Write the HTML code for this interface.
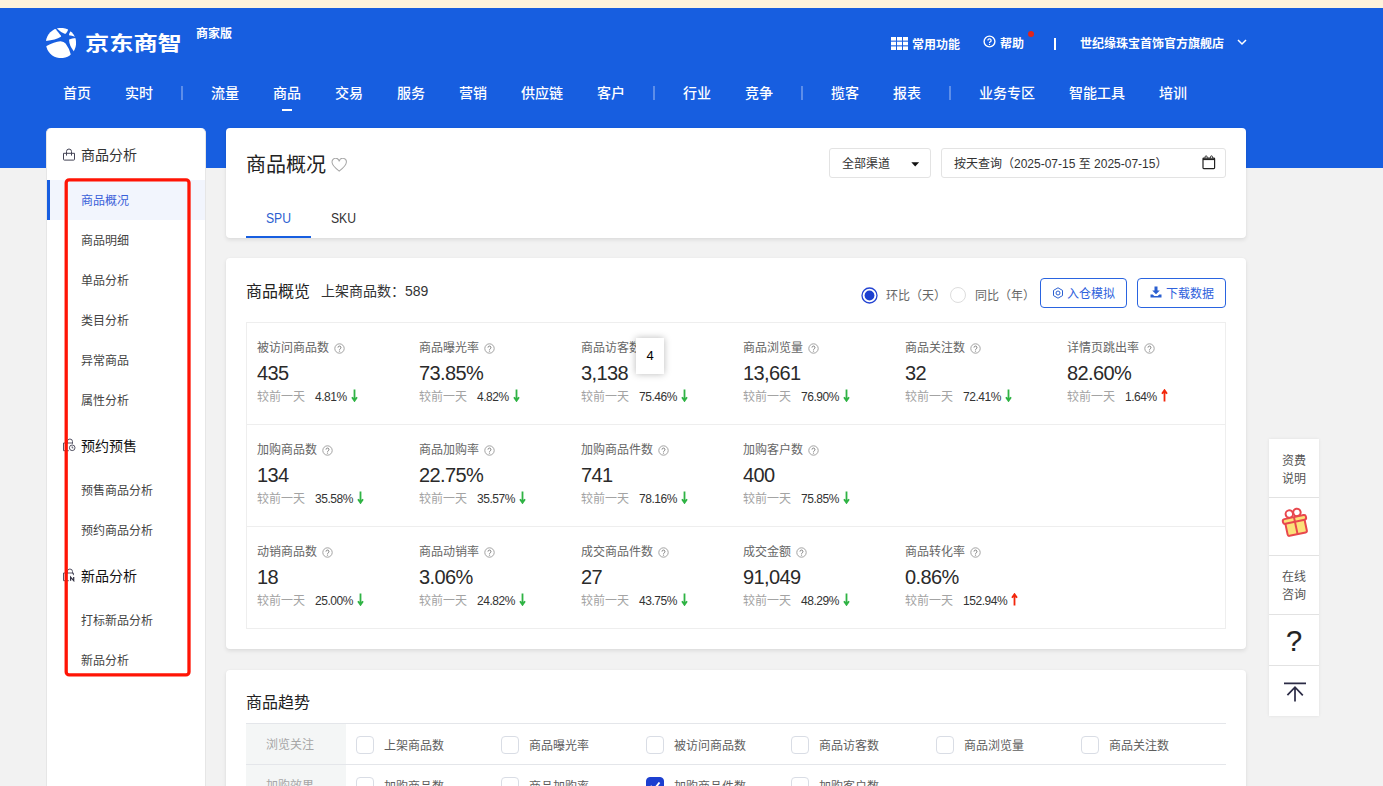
<!DOCTYPE html>
<html lang="zh-CN">
<head>
<meta charset="utf-8">
<title>京东商智 - 商品概况</title>
<style>
*{box-sizing:border-box;margin:0;padding:0}
html,body{width:1383px;height:786px;overflow:hidden}
body{background:#f2f2f2;font-family:"Liberation Sans","Noto Sans CJK SC",sans-serif;font-size:12px;color:#333;position:relative}
.abs{position:absolute}
.topstrip{position:absolute;left:0;top:0;width:1383px;height:8px;background:#fdf3dc}
.header{position:absolute;left:0;top:0;width:1383px;height:168px;background:#175ee0}
.logo-txt{position:absolute;left:85px;top:29px;font-size:20px;line-height:30px;font-weight:700;color:#fff;white-space:nowrap;transform:scaleX(1.21);transform-origin:0 50%}
.ver{position:absolute;left:196px;top:25px;font-size:12px;line-height:16px;font-weight:700;color:#fff;white-space:nowrap}
.nav{position:absolute;left:46px;top:80px;height:26px;display:flex;align-items:center;color:#fff;font-size:14px;font-weight:500;white-space:nowrap}
.nav span{display:block;padding:0 17px;line-height:26px}
.nav i{display:block;width:24px;height:14px;position:relative}
.nav i:after{content:"";position:absolute;left:11px;top:0;width:2px;height:14px;background:rgba(255,255,255,.3)}
.navline{position:absolute;left:282px;top:109px;width:10px;height:2px;background:#fff}
.tr{position:absolute;top:35px;color:#fff;font-size:12px;font-weight:700;line-height:16px;white-space:nowrap}

.side{position:absolute;left:46px;top:128px;width:160px;height:670px;background:#fff;border-radius:5px 5px 0 0;border:1px solid #e6e6e6;border-top:0}
.side .h1{position:absolute;left:34px;font-size:14px;line-height:20px;color:#333;white-space:nowrap}
.side .it{position:absolute;left:34px;font-size:12px;line-height:20px;color:#444;white-space:nowrap}
.side .act{position:absolute;left:0;top:52px;width:158px;height:40px;background:#f2f5fd;border-left:3px solid #175ee0}
.redbox{position:absolute;left:0;top:0}

.card{position:absolute;left:226px;width:1020px;background:#fff;border-radius:4px;box-shadow:0 2px 4px rgba(0,0,0,.09),0 0 2px rgba(0,0,0,.04)}
.t{position:absolute;white-space:nowrap}
.sx{transform:scaleX(.87);transform-origin:0 50%}
.box{position:absolute;border:1px solid #e3e3e3;border-radius:3px;background:#fff}
.btn{position:absolute;top:20px;height:30px;border:1px solid #2a64e0;border-radius:4px;color:#2f62dc;font-size:12px;line-height:30px;white-space:nowrap}

.grid{position:absolute;left:20px;top:64px;width:980px;height:307px;border:1px solid #eee}
.grid .hl{position:absolute;left:0;width:978px;height:1px;background:#eee}
.cell{position:absolute;width:160px;height:100px}
.cell .lb{position:absolute;left:0;top:16px;font-size:12px;line-height:18px;color:#666;white-space:nowrap}
.cell .lb svg{vertical-align:-1.5px;margin-left:5px}
.cell .nm{position:absolute;left:0;top:36px;font-size:20px;line-height:28px;color:#2a2a2a;white-space:nowrap;letter-spacing:-.6px}
.cell .cp{position:absolute;left:0;top:65px;font-size:12px;line-height:18px;color:#a3a3a3;white-space:nowrap}
.cell .cp b{font-weight:400;color:#333;margin-left:10px;letter-spacing:-0.45px}
.cell .cp em{font-style:normal;font-weight:700;margin-left:2px}
.cell .cp .ar{margin-left:4px;vertical-align:-1px}

.trow{position:absolute;left:20px;width:980px;height:42px;border-top:1px solid #e4e6ea}
.trow .th{position:absolute;left:0;top:0;width:100px;height:41px;background:#f4f6f6;color:#a6a6a6;font-size:12px;line-height:43px;padding-left:20px}
.ck{position:absolute;top:12px;width:18px;height:18px;border:1px solid #d9dde5;border-radius:4px;background:#fff;margin-left:-1px}
.ck.on{background:#1c3fd0;border-color:#1c3fd0}
.ckl{position:absolute;top:12px;font-size:12px;line-height:20px;color:#5e5e5e;white-space:nowrap}

.float{position:absolute;left:1269px;top:439px;width:50px;height:277px;background:#fff;box-shadow:0 0 3px rgba(0,0,0,.08)}
.float .fi{position:absolute;left:0;width:50px;border-top:1px solid #e2e2e2;text-align:center;font-size:12px;line-height:18px;color:#555}
.tip{position:absolute;left:636px;top:338px;width:28px;height:36px;background:#fff;box-shadow:0 0 7px rgba(0,0,0,.28);font-size:13px;line-height:36px;text-align:center;color:#000}
</style>
</head>
<body>
<div class="header">
  <svg class="abs" style="left:46px;top:28px" width="30" height="30" viewBox="0 0 30 30">
    <defs><clipPath id="lc"><circle cx="15" cy="15" r="15.1"/></clipPath></defs>
    <g clip-path="url(#lc)" fill="#fff">
      <path d="M-2 13.1 Q9 12.4 14.9 8.8 Q15.4 8.2 14.8 7.4 Q12.4 4.4 9.7 1.2 L4 -2 L-2 4 Z"/>
      <path d="M10.9 0.6 Q15 4.6 18.6 5.8 Q19.4 6 20 5.4 Q21.8 3.6 22.2 1.2 L22 -2 L11 -2 Z"/>
      <path d="M24.4 3.4 Q22.9 5.4 23 7.3 Q25.8 7.6 29 8.7 L32 6 L28 0 Z"/>
      <path d="M23.2 11.4 Q26 10.4 30 10 L32 14 L32 24 L27.9 23.4 Q22.6 16.4 23.2 11.4 Z"/>
      <path d="M-1 18.8 Q8 14 14.5 13.3 Q18 13.4 19.6 15.6 Q23.6 21 24.8 26.6 L24 32 L-2 32 Z"/>
    </g>
  </svg>
  <div class="logo-txt">京东商智</div>
  <div class="ver" style="top:26px">商家版</div>
  <div class="nav">
    <span>首页</span><span>实时</span><i></i><span>流量</span><span>商品</span><span>交易</span><span>服务</span><span>营销</span><span>供应链</span><span>客户</span><i></i><span>行业</span><span>竞争</span><i></i><span>揽客</span><span>报表</span><i></i><span>业务专区</span><span>智能工具</span><span>培训</span>
  </div>
  <div class="navline"></div>
  <svg class="abs" style="left:890.5px;top:37px" width="17" height="13" viewBox="0 0 17 13" fill="#fff">
    <rect x="0" y="0" width="5" height="3.6"/><rect x="6" y="0" width="5" height="3.6"/><rect x="12" y="0" width="5" height="3.6"/>
    <rect x="0" y="4.7" width="5" height="3.6"/><rect x="6" y="4.7" width="5" height="3.6"/><rect x="12" y="4.7" width="5" height="3.6"/>
    <rect x="0" y="9.4" width="5" height="3.6"/><rect x="6" y="9.4" width="5" height="3.6"/><rect x="12" y="9.4" width="5" height="3.6"/>
  </svg>
  <div class="tr" style="left:912px;top:37px">常用功能</div>
  <svg class="abs" style="left:983px;top:35.2px" width="13" height="13" viewBox="0 0 13 13">
    <circle cx="6.5" cy="6.5" r="5.4" fill="none" stroke="#fff" stroke-width="1.4"/>
    <path d="M4.9 5.4 a1.6 1.6 0 1 1 2.4 1.4 c-.6 .35 -.8 .6 -.8 1.2" fill="none" stroke="#fff" stroke-width="1.3"/>
    <circle cx="6.5" cy="9.4" r=".7" fill="#fff"/>
  </svg>
  <div class="tr" style="left:1000px;top:36px">帮助</div>
  <div class="abs" style="left:1028px;top:31px;width:6px;height:6px;border-radius:3px;background:#e1251b"></div>
  <div class="abs" style="left:1054px;top:38px;width:2px;height:12px;background:#fff"></div>
  <div class="tr" style="left:1080px;top:36px">世纪缘珠宝首饰官方旗舰店</div>
  <svg class="abs" style="left:1236px;top:38px" width="12" height="8" viewBox="0 0 12 8"><path d="M2 2 L6 6 L10 2" fill="none" stroke="#fff" stroke-width="1.5"/></svg>
</div>
<div class="topstrip"></div>

<div class="side">
  <svg class="abs" style="left:15px;top:19.5px" width="14" height="14" viewBox="0 0 14 14" fill="none" stroke="#445" stroke-width="1">
    <path d="M1.5 5.3 h11 v6 a.8 .8 0 0 1 -.8 .8 h-9.4 a.8 .8 0 0 1 -.8 -.8 z M4.5 7.6 v-4.1 a2.5 2.5 0 0 1 5 0 v4.1"/>
  </svg>
  <div class="h1" style="top:17px">商品分析</div>
  <div class="act"></div>
  <div class="it" style="top:63px;color:#3a5fd9">商品概况</div>
  <div class="it" style="top:103px">商品明细</div>
  <div class="it" style="top:143px">单品分析</div>
  <div class="it" style="top:183px">类目分析</div>
  <div class="it" style="top:223px">异常商品</div>
  <div class="it" style="top:263px">属性分析</div>
  <svg class="abs" style="left:15px;top:310px" width="14" height="14" viewBox="0 0 14 14" fill="none" stroke="#556" stroke-width="1">
    <path d="M6.8 12.7 H1.5 V5 H10.2 M5.3 5.6 V3.6 a2.6 2.6 0 0 1 5.2 0 V5.8"/><circle cx="10.2" cy="9.8" r="2.8" fill="#fff"/><path d="M10.2 8.4 V9.9 H11.3"/>
  </svg>
  <div class="h1" style="top:308px;color:#111">预约预售</div>
  <div class="it" style="top:353px">预售商品分析</div>
  <div class="it" style="top:393px">预约商品分析</div>
  <svg class="abs" style="left:15px;top:440px" width="14" height="14" viewBox="0 0 14 14" fill="none" stroke="#556" stroke-width="1">
    <path d="M6.8 12.7 H1.5 V5 H11.4 V7.2 M5.3 5.6 V3.6 a2.6 2.6 0 0 1 5.2 0 V5.6"/><path d="M8.6 12.8 V9.2 L11.7 12.6 V9" stroke="#334" stroke-width="1.25"/>
  </svg>
  <div class="h1" style="top:438px;color:#111">新品分析</div>
  <div class="it" style="top:483px">打标新品分析</div>
  <div class="it" style="top:523px">新品分析</div>
</div>
<svg class="redbox" width="220" height="700" viewBox="0 0 220 700"><rect x="66.2" y="179.8" width="122.8" height="495.1" rx="3" ry="3" fill="none" stroke="#ff1405" stroke-width="3.3"/></svg>

<!-- card 1 -->
<div class="card" style="top:128px;height:110px">
  <div class="t" style="left:20px;top:23px;font-size:20px;line-height:28px;color:#222">商品概况</div>
  <svg class="abs" style="left:105px;top:30.3px" width="16.4" height="14.6" viewBox="0 0 18 16"><path d="M9 14.5 C4 10.5 1.2 8 1.2 5 A3.6 3.6 0 0 1 9 3.6 A3.6 3.6 0 0 1 16.8 5 C16.8 8 14 10.5 9 14.5 Z" fill="none" stroke="#a6a6a6" stroke-width="1.1"/></svg>
  <div class="box" style="left:603px;top:20px;width:102px;height:30px"></div>
  <div class="t" style="left:616px;top:27px;font-size:12px;line-height:18px;color:#333">全部渠道</div>
  <svg class="abs" style="left:685px;top:34px" width="9" height="6" viewBox="0 0 9 6"><path d="M0.3 0.3 H8.1 L4.2 4.6 Z" fill="#111"/></svg>
  <div class="box" style="left:715px;top:20px;width:285px;height:30px"></div>
  <div class="t" style="left:728px;top:27px;font-size:12px;line-height:18px;color:#333">按天查询（2025-07-15 至 2025-07-15）</div>
  <svg class="abs" style="left:975.6px;top:26.5px" width="14" height="15" viewBox="0 0 14 15" fill="none" stroke="#222" stroke-width="1.2"><rect x="1" y="3" width="11.6" height="10.6" rx=".8"/><path d="M1 4.2 h11.6" stroke-width="1.8"/><rect x="3.2" y="0.8" width="1.8" height="3" rx=".9" stroke-width=".9" fill="#fff"/><rect x="8.6" y="0.8" width="1.8" height="3" rx=".9" stroke-width=".9" fill="#fff"/></svg>
  <div class="t sx" style="left:40px;top:80px;font-size:14px;line-height:20px;color:#2b5fd0">SPU</div>
  <div class="t sx" style="left:105px;top:80px;font-size:14px;line-height:20px;color:#333">SKU</div>
  <div class="abs" style="left:20px;top:108px;width:65px;height:2px;background:#175ee0"></div>
</div>

<!-- card 2 -->
<div class="card" style="top:258px;height:391px">
  <div class="t" style="left:20px;top:22px;font-size:16px;line-height:24px;color:#222">商品概览</div>
  <div class="t" style="left:95px;top:23px;font-size:14px;line-height:20px;color:#333">上架商品数：589</div>
  <svg class="abs" style="left:634.5px;top:28.5px" width="17" height="17" viewBox="0 0 17 17"><circle cx="8.5" cy="8.5" r="7.5" fill="#fff" stroke="#2444d2" stroke-width="1.3"/><circle cx="8.5" cy="8.5" r="4.9" fill="#1c3fd0"/></svg>
  <div class="t" style="left:660px;top:29px;font-size:12px;line-height:18px;color:#666">环比（天）</div>
  <div class="abs" style="left:724px;top:29px;width:16px;height:16px;border:1px solid #ddd;border-radius:8px"></div>
  <div class="t" style="left:749px;top:29px;font-size:12px;line-height:18px;color:#666">同比（年）</div>
  <div class="btn" style="left:814px;width:87px;padding-left:26px">入仓模拟
    <svg class="abs" style="left:11px;top:8px" width="12" height="12" viewBox="0 0 12 12" fill="none" stroke="#2b5fd0" stroke-width="1"><path d="M6 .8 L10.5 3.4 V8.6 L6 11.2 L1.5 8.6 V3.4 Z"/><circle cx="6" cy="6" r="2"/></svg>
  </div>
  <div class="btn" style="left:911px;width:89px;padding-left:28px">下载数据
    <svg class="abs" style="left:11.5px;top:7.3px" width="12" height="12" viewBox="0 0 12 12" fill="#2b5fd0"><path d="M4.5 0.5 h3 v4 h2.3 L6 8.3 L2.2 4.5 h2.3 z M0.5 8.5 h2.2 l1.6 1.5 h3.4 l1.6 -1.5 h2.2 v3 h-11 z"/></svg>
  </div>
  <div class="grid">
    <div class="hl" style="top:101px"></div>
    <div class="hl" style="top:203px"></div>
    <div class="cell" style="left:10px;top:0px"><div class="lb">被访问商品数<svg width="11" height="11" viewBox="0 0 11 11"><circle cx="5.5" cy="5.5" r="4.7" fill="none" stroke="#999" stroke-width="0.9"/><path d="M4 4.6 a1.5 1.5 0 1 1 2.3 1.2 c-.55 .3 -.75 .55 -.75 1.1" fill="none" stroke="#888" stroke-width="1"/><circle cx="5.5" cy="8.1" r=".65" fill="#888"/></svg></div><div class="nm">435</div><div class="cp">较前一天<b>4.81%</b><svg class="ar" width="7" height="13" viewBox="0 0 7 13"><path d="M3.5 0.5 V11.5 M1 8.3 L3.5 11.8 L6 8.3" fill="none" stroke="#2fb344" stroke-width="1.8"/></svg></div></div>
    <div class="cell" style="left:172px;top:0px"><div class="lb">商品曝光率<svg width="11" height="11" viewBox="0 0 11 11"><circle cx="5.5" cy="5.5" r="4.7" fill="none" stroke="#999" stroke-width="0.9"/><path d="M4 4.6 a1.5 1.5 0 1 1 2.3 1.2 c-.55 .3 -.75 .55 -.75 1.1" fill="none" stroke="#888" stroke-width="1"/><circle cx="5.5" cy="8.1" r=".65" fill="#888"/></svg></div><div class="nm">73.85%</div><div class="cp">较前一天<b>4.82%</b><svg class="ar" width="7" height="13" viewBox="0 0 7 13"><path d="M3.5 0.5 V11.5 M1 8.3 L3.5 11.8 L6 8.3" fill="none" stroke="#2fb344" stroke-width="1.8"/></svg></div></div>
    <div class="cell" style="left:334px;top:0px"><div class="lb">商品访客数<svg width="11" height="11" viewBox="0 0 11 11"><circle cx="5.5" cy="5.5" r="4.7" fill="none" stroke="#999" stroke-width="0.9"/><path d="M4 4.6 a1.5 1.5 0 1 1 2.3 1.2 c-.55 .3 -.75 .55 -.75 1.1" fill="none" stroke="#888" stroke-width="1"/><circle cx="5.5" cy="8.1" r=".65" fill="#888"/></svg></div><div class="nm">3,138</div><div class="cp">较前一天<b>75.46%</b><svg class="ar" width="7" height="13" viewBox="0 0 7 13"><path d="M3.5 0.5 V11.5 M1 8.3 L3.5 11.8 L6 8.3" fill="none" stroke="#2fb344" stroke-width="1.8"/></svg></div></div>
    <div class="cell" style="left:496px;top:0px"><div class="lb">商品浏览量<svg width="11" height="11" viewBox="0 0 11 11"><circle cx="5.5" cy="5.5" r="4.7" fill="none" stroke="#999" stroke-width="0.9"/><path d="M4 4.6 a1.5 1.5 0 1 1 2.3 1.2 c-.55 .3 -.75 .55 -.75 1.1" fill="none" stroke="#888" stroke-width="1"/><circle cx="5.5" cy="8.1" r=".65" fill="#888"/></svg></div><div class="nm">13,661</div><div class="cp">较前一天<b>76.90%</b><svg class="ar" width="7" height="13" viewBox="0 0 7 13"><path d="M3.5 0.5 V11.5 M1 8.3 L3.5 11.8 L6 8.3" fill="none" stroke="#2fb344" stroke-width="1.8"/></svg></div></div>
    <div class="cell" style="left:658px;top:0px"><div class="lb">商品关注数<svg width="11" height="11" viewBox="0 0 11 11"><circle cx="5.5" cy="5.5" r="4.7" fill="none" stroke="#999" stroke-width="0.9"/><path d="M4 4.6 a1.5 1.5 0 1 1 2.3 1.2 c-.55 .3 -.75 .55 -.75 1.1" fill="none" stroke="#888" stroke-width="1"/><circle cx="5.5" cy="8.1" r=".65" fill="#888"/></svg></div><div class="nm">32</div><div class="cp">较前一天<b>72.41%</b><svg class="ar" width="7" height="13" viewBox="0 0 7 13"><path d="M3.5 0.5 V11.5 M1 8.3 L3.5 11.8 L6 8.3" fill="none" stroke="#2fb344" stroke-width="1.8"/></svg></div></div>
    <div class="cell" style="left:820px;top:0px"><div class="lb">详情页跳出率<svg width="11" height="11" viewBox="0 0 11 11"><circle cx="5.5" cy="5.5" r="4.7" fill="none" stroke="#999" stroke-width="0.9"/><path d="M4 4.6 a1.5 1.5 0 1 1 2.3 1.2 c-.55 .3 -.75 .55 -.75 1.1" fill="none" stroke="#888" stroke-width="1"/><circle cx="5.5" cy="8.1" r=".65" fill="#888"/></svg></div><div class="nm">82.60%</div><div class="cp">较前一天<b>1.64%</b><svg class="ar" width="7" height="13" viewBox="0 0 7 13"><path d="M3.5 12.5 V1.5 M1 4.7 L3.5 1.2 L6 4.7" fill="none" stroke="#f2270c" stroke-width="1.8"/></svg></div></div>
    <div class="cell" style="left:10px;top:102px"><div class="lb">加购商品数<svg width="11" height="11" viewBox="0 0 11 11"><circle cx="5.5" cy="5.5" r="4.7" fill="none" stroke="#999" stroke-width="0.9"/><path d="M4 4.6 a1.5 1.5 0 1 1 2.3 1.2 c-.55 .3 -.75 .55 -.75 1.1" fill="none" stroke="#888" stroke-width="1"/><circle cx="5.5" cy="8.1" r=".65" fill="#888"/></svg></div><div class="nm">134</div><div class="cp">较前一天<b>35.58%</b><svg class="ar" width="7" height="13" viewBox="0 0 7 13"><path d="M3.5 0.5 V11.5 M1 8.3 L3.5 11.8 L6 8.3" fill="none" stroke="#2fb344" stroke-width="1.8"/></svg></div></div>
    <div class="cell" style="left:172px;top:102px"><div class="lb">商品加购率<svg width="11" height="11" viewBox="0 0 11 11"><circle cx="5.5" cy="5.5" r="4.7" fill="none" stroke="#999" stroke-width="0.9"/><path d="M4 4.6 a1.5 1.5 0 1 1 2.3 1.2 c-.55 .3 -.75 .55 -.75 1.1" fill="none" stroke="#888" stroke-width="1"/><circle cx="5.5" cy="8.1" r=".65" fill="#888"/></svg></div><div class="nm">22.75%</div><div class="cp">较前一天<b>35.57%</b><svg class="ar" width="7" height="13" viewBox="0 0 7 13"><path d="M3.5 0.5 V11.5 M1 8.3 L3.5 11.8 L6 8.3" fill="none" stroke="#2fb344" stroke-width="1.8"/></svg></div></div>
    <div class="cell" style="left:334px;top:102px"><div class="lb">加购商品件数<svg width="11" height="11" viewBox="0 0 11 11"><circle cx="5.5" cy="5.5" r="4.7" fill="none" stroke="#999" stroke-width="0.9"/><path d="M4 4.6 a1.5 1.5 0 1 1 2.3 1.2 c-.55 .3 -.75 .55 -.75 1.1" fill="none" stroke="#888" stroke-width="1"/><circle cx="5.5" cy="8.1" r=".65" fill="#888"/></svg></div><div class="nm">741</div><div class="cp">较前一天<b>78.16%</b><svg class="ar" width="7" height="13" viewBox="0 0 7 13"><path d="M3.5 0.5 V11.5 M1 8.3 L3.5 11.8 L6 8.3" fill="none" stroke="#2fb344" stroke-width="1.8"/></svg></div></div>
    <div class="cell" style="left:496px;top:102px"><div class="lb">加购客户数<svg width="11" height="11" viewBox="0 0 11 11"><circle cx="5.5" cy="5.5" r="4.7" fill="none" stroke="#999" stroke-width="0.9"/><path d="M4 4.6 a1.5 1.5 0 1 1 2.3 1.2 c-.55 .3 -.75 .55 -.75 1.1" fill="none" stroke="#888" stroke-width="1"/><circle cx="5.5" cy="8.1" r=".65" fill="#888"/></svg></div><div class="nm">400</div><div class="cp">较前一天<b>75.85%</b><svg class="ar" width="7" height="13" viewBox="0 0 7 13"><path d="M3.5 0.5 V11.5 M1 8.3 L3.5 11.8 L6 8.3" fill="none" stroke="#2fb344" stroke-width="1.8"/></svg></div></div>
    <div class="cell" style="left:10px;top:204px"><div class="lb">动销商品数<svg width="11" height="11" viewBox="0 0 11 11"><circle cx="5.5" cy="5.5" r="4.7" fill="none" stroke="#999" stroke-width="0.9"/><path d="M4 4.6 a1.5 1.5 0 1 1 2.3 1.2 c-.55 .3 -.75 .55 -.75 1.1" fill="none" stroke="#888" stroke-width="1"/><circle cx="5.5" cy="8.1" r=".65" fill="#888"/></svg></div><div class="nm">18</div><div class="cp">较前一天<b>25.00%</b><svg class="ar" width="7" height="13" viewBox="0 0 7 13"><path d="M3.5 0.5 V11.5 M1 8.3 L3.5 11.8 L6 8.3" fill="none" stroke="#2fb344" stroke-width="1.8"/></svg></div></div>
    <div class="cell" style="left:172px;top:204px"><div class="lb">商品动销率<svg width="11" height="11" viewBox="0 0 11 11"><circle cx="5.5" cy="5.5" r="4.7" fill="none" stroke="#999" stroke-width="0.9"/><path d="M4 4.6 a1.5 1.5 0 1 1 2.3 1.2 c-.55 .3 -.75 .55 -.75 1.1" fill="none" stroke="#888" stroke-width="1"/><circle cx="5.5" cy="8.1" r=".65" fill="#888"/></svg></div><div class="nm">3.06%</div><div class="cp">较前一天<b>24.82%</b><svg class="ar" width="7" height="13" viewBox="0 0 7 13"><path d="M3.5 0.5 V11.5 M1 8.3 L3.5 11.8 L6 8.3" fill="none" stroke="#2fb344" stroke-width="1.8"/></svg></div></div>
    <div class="cell" style="left:334px;top:204px"><div class="lb">成交商品件数<svg width="11" height="11" viewBox="0 0 11 11"><circle cx="5.5" cy="5.5" r="4.7" fill="none" stroke="#999" stroke-width="0.9"/><path d="M4 4.6 a1.5 1.5 0 1 1 2.3 1.2 c-.55 .3 -.75 .55 -.75 1.1" fill="none" stroke="#888" stroke-width="1"/><circle cx="5.5" cy="8.1" r=".65" fill="#888"/></svg></div><div class="nm">27</div><div class="cp">较前一天<b>43.75%</b><svg class="ar" width="7" height="13" viewBox="0 0 7 13"><path d="M3.5 0.5 V11.5 M1 8.3 L3.5 11.8 L6 8.3" fill="none" stroke="#2fb344" stroke-width="1.8"/></svg></div></div>
    <div class="cell" style="left:496px;top:204px"><div class="lb">成交金额<svg width="11" height="11" viewBox="0 0 11 11"><circle cx="5.5" cy="5.5" r="4.7" fill="none" stroke="#999" stroke-width="0.9"/><path d="M4 4.6 a1.5 1.5 0 1 1 2.3 1.2 c-.55 .3 -.75 .55 -.75 1.1" fill="none" stroke="#888" stroke-width="1"/><circle cx="5.5" cy="8.1" r=".65" fill="#888"/></svg></div><div class="nm">91,049</div><div class="cp">较前一天<b>48.29%</b><svg class="ar" width="7" height="13" viewBox="0 0 7 13"><path d="M3.5 0.5 V11.5 M1 8.3 L3.5 11.8 L6 8.3" fill="none" stroke="#2fb344" stroke-width="1.8"/></svg></div></div>
    <div class="cell" style="left:658px;top:204px"><div class="lb">商品转化率<svg width="11" height="11" viewBox="0 0 11 11"><circle cx="5.5" cy="5.5" r="4.7" fill="none" stroke="#999" stroke-width="0.9"/><path d="M4 4.6 a1.5 1.5 0 1 1 2.3 1.2 c-.55 .3 -.75 .55 -.75 1.1" fill="none" stroke="#888" stroke-width="1"/><circle cx="5.5" cy="8.1" r=".65" fill="#888"/></svg></div><div class="nm">0.86%</div><div class="cp">较前一天<b>152.94%</b><svg class="ar" width="7" height="13" viewBox="0 0 7 13"><path d="M3.5 12.5 V1.5 M1 4.7 L3.5 1.2 L6 4.7" fill="none" stroke="#f2270c" stroke-width="1.8"/></svg></div></div>
  </div>
</div>

<!-- card 3 -->
<div class="card" style="top:670px;height:130px;border-radius:4px 4px 0 0">
  <div class="t" style="left:20px;top:21px;font-size:16px;line-height:24px;color:#222">商品趋势</div>
  <div class="trow" style="top:53px">
    <div class="th">浏览关注</div>
    <div class="ck" style="left:111px"></div>
    <div class="ckl" style="left:138px">上架商品数</div>
    <div class="ck" style="left:256px"></div>
    <div class="ckl" style="left:283px">商品曝光率</div>
    <div class="ck" style="left:401px"></div>
    <div class="ckl" style="left:428px">被访问商品数</div>
    <div class="ck" style="left:546px"></div>
    <div class="ckl" style="left:573px">商品访客数</div>
    <div class="ck" style="left:691px"></div>
    <div class="ckl" style="left:718px">商品浏览量</div>
    <div class="ck" style="left:836px"></div>
    <div class="ckl" style="left:863px">商品关注数</div>
  </div>
  <div class="trow" style="top:94px">
    <div class="th">加购效果</div>
    <div class="ck" style="left:111px"></div>
    <div class="ckl" style="left:138px">加购商品数</div>
    <div class="ck" style="left:256px"></div>
    <div class="ckl" style="left:283px">商品加购率</div>
    <div class="ck on" style="left:401px"><svg width="16" height="16" viewBox="0 0 16 16" style="display:block"><path d="M3.5 8 L7 11.5 L12.5 4.5" fill="none" stroke="#fff" stroke-width="2"/></svg></div>
    <div class="ckl" style="left:428px">加购商品件数</div>
    <div class="ck" style="left:546px"></div>
    <div class="ckl" style="left:573px">加购客户数</div>
  </div>
</div>

<div class="float">
  <div class="fi" style="top:0;height:58px;border-top:0;padding-top:13px">资费<br>说明</div>
  <div class="fi" style="top:58px;height:58px">
    <svg class="abs" style="left:11px;top:7.6px" width="30" height="32" viewBox="0 0 30 32">
      <g transform="rotate(-12 15 16)" stroke="#e8474d" stroke-width="2" stroke-linejoin="round" fill="none">
        <circle cx="11.1" cy="7" r="3.7" fill="#fff"/><circle cx="18.9" cy="7" r="3.7" fill="#fff"/>
        <rect x="5.2" y="15" width="19.6" height="13.4" rx="1.6" fill="#fbe07a"/>
        <rect x="3.2" y="11" width="23.6" height="4.8" rx="2" fill="#fbe07a"/>
        <path d="M15 11 V28.4"/>
      </g>
    </svg>
  </div>
  <div class="fi" style="top:116px;height:59px;padding-top:12px">在线<br>咨询</div>
  <div class="fi" style="top:175px;height:51px;font-size:29px;line-height:53px;color:#222;-webkit-text-stroke:.2px #222">?</div>
  <div class="fi" style="top:226px;height:51px">
    <svg class="abs" style="left:14px;top:16px" width="24" height="22" viewBox="0 0 24 22" fill="none" stroke="#2b2b45" stroke-width="1.7">
      <path d="M1 1.4 H23 M12 5 V19.6 M4.4 13.2 L12 5.2 L19.8 13.4"/>
    </svg>
  </div>
</div>
<div class="tip">4</div>
</body>
</html>
